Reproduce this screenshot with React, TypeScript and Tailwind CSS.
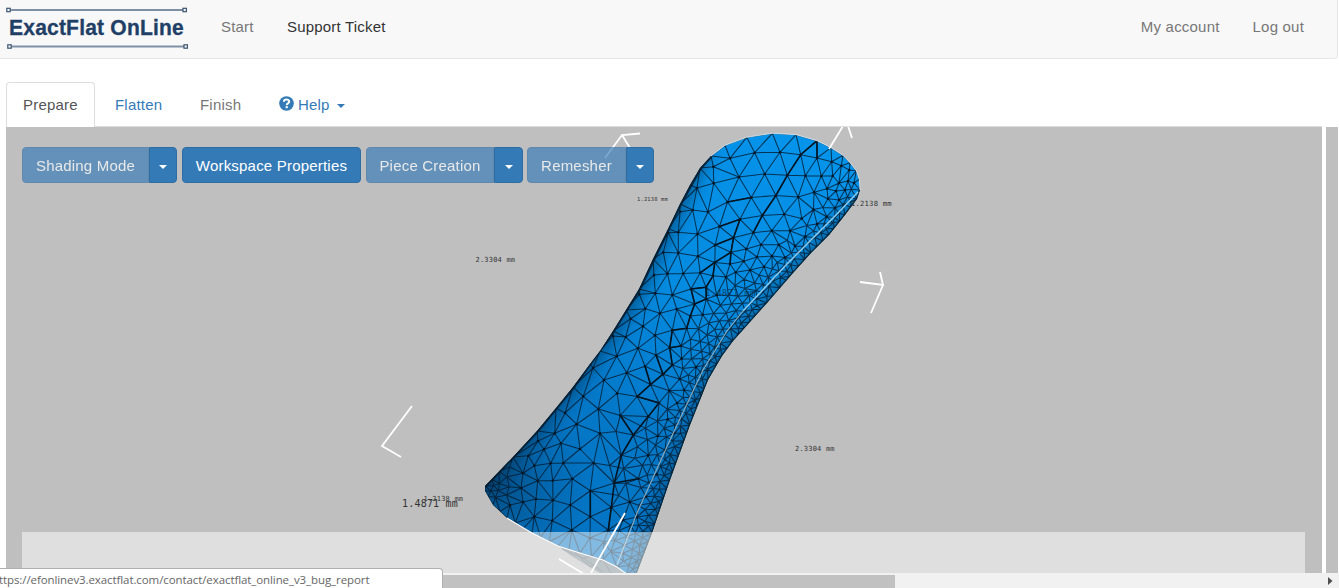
import React from "react";

type Pt = [number, number];

const OUTLINE: Pt[] = [
  [711, 156], [725, 145.3], [746.7, 137.3], [772.3, 133.3], [796, 134.7], [817, 140.7], [831, 147.7], [843, 155.3],
  [850, 162.7], [856.3, 170.7], [859.3, 179.3], [860, 190], [857, 199], [845, 215], [829, 235], [811, 253], [793, 273], [767, 303],
  [733, 341], [722, 356], [708, 380], [690, 425], [670, 480], [652, 533], [636, 575], [627, 575], [617, 567],
  [603, 560], [580, 553], [558, 546], [532, 533], [507, 518], [493, 505], [485, 491], [485, 486], [513, 457], [537, 431],
  [556, 408], [573, 387], [590, 364], [600, 351], [613, 331], [639, 289], [653, 259], [668, 229], [680, 204], [690, 185], [700, 168],
];

const RIGHT_EDGE: Pt[] = OUTLINE.slice(11, 25);

const SEAM: Pt[] = [
  [858, 192], [837, 214], [822, 229], [787, 264], [743, 311], [727, 331], [703, 370], [670, 440], [637, 513], [617, 565],
];

const VERTS: Pt[] = [
  [730, 158.3], [754.7, 152.7], [780, 152.3], [800.7, 154.7], [817, 158], [831.7, 161.7], [841.3, 165.7], [849.3, 170],
  [713.3, 166.7], [713.7, 183.3], [739, 177], [764.7, 174], [787.3, 175.3], [805.3, 175.7], [821.3, 176], [832.7, 176],
  [839, 183], [848, 181], [854, 183], [697, 188], [692.7, 210], [708, 212], [727.5, 202], [751.3, 197.5], [775.9, 195.5],
  [798.2, 197], [814, 192.3], [827, 188.7], [836, 191], [845, 190], [828, 198.7], [839, 200], [835, 208], [813.5, 209.5],
  [719.5, 226.5], [740, 219.3], [762.3, 215.5], [784.2, 214.2], [801.7, 218.5], [817, 224], [826.7, 216.7], [680, 211.7],
  [697.5, 233.9], [678.3, 232.3], [668.3, 232.7], [715.2, 245], [733.5, 237.8], [753.3, 232.7], [771.7, 230.7],
  [790, 230.7], [805, 236.7], [731, 252.3], [746.3, 249], [761, 244.7], [778.7, 244.7], [795, 246], [714.8, 262.4],
  [698, 256.3], [678.3, 253], [663.3, 252.3], [730, 264], [743.7, 261.3], [757, 257], [772, 256], [785, 257.5],
  [700.2, 272.8], [713, 275.8], [726, 277], [735.7, 272.3], [750, 270], [764, 266.7], [683.2, 273.5], [667.5, 273.8],
  [654, 275], [706, 287.3], [691, 289], [694.7, 304], [706.3, 299], [716.7, 295.3], [672.3, 295], [655.3, 293.3],
  [639.3, 294.3], [676.7, 309], [660, 313.3], [645.3, 308.7], [630.7, 318.7], [643, 326.3], [625.7, 337], [638, 348.3],
  [655, 335.3], [672.3, 330.3], [686.7, 328.3], [690.3, 316], [702.7, 314.7], [681, 346], [669.7, 347.7], [656, 355],
  [645, 366.3], [626.8, 372.8], [616.7, 356.3], [672.3, 365], [663, 374.2], [681.7, 358.7], [613, 336], [604, 380],
  [593, 368], [583.2, 396.4], [598.3, 409], [617.2, 393.2], [637.2, 396.5], [650.6, 384.5], [620.3, 415.5], [648.2, 416.5],
  [659, 403], [669.3, 390.7], [576.7, 424.2], [565, 413], [679.7, 379], [696, 367], [684, 390], [677, 403],
  [667.7, 419.3], [600, 433.3], [633.3, 435], [658, 436], [674.3, 433.3], [580, 449], [561, 443.3], [554.7, 433.3],
  [593.7, 463], [621.3, 455.3], [648.3, 455.3], [665, 450], [544, 449.3], [538, 441], [563.3, 463], [572.3, 478.7],
  [614.3, 483], [638.3, 478.7], [656.7, 474.3], [550.7, 463.3], [552.7, 480.7], [537.7, 480.7], [534.3, 465.7],
  [528.3, 455.7], [523, 473.3], [590.3, 490.7], [570.3, 505], [553, 500.3], [590.3, 516.7], [611.3, 507.3], [629.7, 502],
  [646, 496.7], [534.3, 516.7], [536, 499], [552.3, 520.7], [571.7, 530], [608.3, 530], [590, 538], [623, 520],
  [637, 517], [523, 502], [521, 488], [510, 505],
];

// Feature edges drawn heavier than the rest of the wireframe.
const CREASES: Pt[][] = [
  [[817, 140.7], [800.7, 154.7], [787.3, 175.3], [775.9, 195.5], [762.3, 215.5], [753.3, 232.7]],
  [[817, 140.7], [817, 158]],
  [[751.3, 197.5], [727.5, 202]],
  [[719.5, 226.5], [740, 219.3], [733.5, 237.8], [731, 252.3], [730, 264]],
  [[733.5, 237.8], [715.2, 245]],
  [[731, 252.3], [714.8, 262.4], [700.2, 272.8]],
  [[714.8, 262.4], [713, 275.8], [706, 287.3], [706.3, 299], [694.7, 304], [691, 289], [706, 287.3]],
  [[694.7, 304], [690.3, 316], [686.7, 328.3], [672.3, 330.3], [669.7, 347.7], [672.3, 365], [663, 374.2], [656, 355]],
  [[681, 346], [669.7, 347.7]],
  [[645, 366.3], [650.6, 384.5], [637.2, 396.5]],
  [[663, 374.2], [650.6, 384.5]],
  [[637.2, 396.5], [659, 403], [648.2, 416.5], [633.3, 435], [620.3, 415.5]],
  [[633.3, 435], [621.3, 455.3], [614.3, 483], [638.3, 478.7]],
  [[614.3, 483], [611.3, 507.3], [608.3, 530]],
  [[590.3, 490.7], [590.3, 516.7]],
];

function segmentDistance(p: Pt, a: Pt, b: Pt): number {
  const dx = b[0] - a[0];
  const dy = b[1] - a[1];
  const t = Math.max(0, Math.min(1, ((p[0] - a[0]) * dx + (p[1] - a[1]) * dy) / (dx * dx + dy * dy)));
  return Math.hypot(p[0] - a[0] - t * dx, p[1] - a[1] - t * dy);
}

function pathDistance(p: Pt, path: Pt[]): number {
  let best = Infinity;
  for (let i = 1; i < path.length; i++) best = Math.min(best, segmentDistance(p, path[i - 1], path[i]));
  return best;
}

function inside(p: Pt, poly: Pt[]): boolean {
  let hit = false;
  for (let i = 0, j = poly.length - 1; i < poly.length; j = i++) {
    const [xi, yi] = poly[i];
    const [xj, yj] = poly[j];
    if (yi > p[1] !== yj > p[1] && p[0] < ((xj - xi) * (p[1] - yi)) / (yj - yi) + xi) hit = !hit;
  }
  return hit;
}

function cellSize(p: Pt): number {
  const right = 4.8 + 0.17 * pathDistance(p, RIGHT_EDGE);
  const tip = 4.4 + 0.18 * Math.hypot(p[0] - 485, p[1] - 488);
  return Math.min(right, tip, 18);
}

function buildPoints(): Pt[] {
  const pts: Pt[] = VERTS.slice();
  const closed = [...OUTLINE, OUTLINE[0]];
  for (let i = 1; i < closed.length; i++) {
    const a = closed[i - 1];
    const b = closed[i];
    const isRim = i <= 11;
    const step = isRim ? 100 : i <= 24 ? 9 : i <= 34 ? 11 : 26;
    const n = Math.max(1, Math.round(Math.hypot(b[0] - a[0], b[1] - a[1]) / step));
    for (let k = 0; k < n; k++) {
      pts.push([a[0] + ((b[0] - a[0]) * k) / n + i * 1e-4, a[1] + ((b[1] - a[1]) * k) / n + k * 1e-4]);
    }
  }
  let seed = 7;
  const random = () => {
    seed = (seed * 16807) % 2147483647;
    return seed / 2147483647;
  };
  for (let y = 150; y < 573; y += 2) {
    for (let x = 486; x < 862; x += 2) {
      const p: Pt = [x + random() * 1.6, y + random() * 1.6];
      if (!inside(p, OUTLINE)) continue;
      const size = cellSize(p);
      if (pts.every((q) => Math.hypot(p[0] - q[0], p[1] - q[1]) > size)) pts.push(p);
    }
  }
  return pts;
}

interface Tri {
  v: [number, number, number];
  cx: number;
  cy: number;
  r: number;
}

function triangulate(source: Pt[]): [Pt, Pt, Pt][] {
  const pts: Pt[] = [...source, [-4000, -3000], [5000, -3000], [600, 6000]];
  const n = source.length;
  const make = (a: number, b: number, c: number): Tri => {
    const [ax, ay] = pts[a];
    const [bx, by] = pts[b];
    const [cx, cy] = pts[c];
    const d = 2 * (ax * (by - cy) + bx * (cy - ay) + cx * (ay - by)) || 1e-9;
    const a2 = ax * ax + ay * ay;
    const b2 = bx * bx + by * by;
    const c2 = cx * cx + cy * cy;
    const ux = (a2 * (by - cy) + b2 * (cy - ay) + c2 * (ay - by)) / d;
    const uy = (a2 * (cx - bx) + b2 * (ax - cx) + c2 * (bx - ax)) / d;
    return { v: [a, b, c], cx: ux, cy: uy, r: (ax - ux) ** 2 + (ay - uy) ** 2 };
  };
  let tris: Tri[] = [make(n, n + 1, n + 2)];
  for (let i = 0; i < n; i++) {
    const [x, y] = pts[i];
    const edges = new Map<string, [number, number]>();
    const keep: Tri[] = [];
    for (const t of tris) {
      if ((x - t.cx) ** 2 + (y - t.cy) ** 2 >= t.r) {
        keep.push(t);
        continue;
      }
      for (let e = 0; e < 3; e++) {
        const a = t.v[e];
        const b = t.v[(e + 1) % 3];
        const key = a < b ? `${a}-${b}` : `${b}-${a}`;
        if (edges.has(key)) edges.delete(key);
        else edges.set(key, [a, b]);
      }
    }
    edges.forEach(([a, b]) => keep.push(make(a, b, i)));
    tris = keep;
  }
  return tris
    .filter((t) => t.v.every((k) => k < n))
    .map((t) => [pts[t.v[0]], pts[t.v[1]], pts[t.v[2]]] as [Pt, Pt, Pt]);
}

const line = (p: Pt[]) => p.map(([x, y], i) => `${i ? "L" : "M"}${x.toFixed(1)} ${y.toFixed(1)}`).join("");

// Each shared edge is emitted once so that translucent strokes do not double up.
function meshPath(): string {
  const edges = new Map<string, string>();
  for (const t of triangulate(buildPoints())) {
    const center: Pt = [(t[0][0] + t[1][0] + t[2][0]) / 3, (t[0][1] + t[1][1] + t[2][1]) / 3];
    if (!inside(center, OUTLINE)) continue;
    for (let e = 0; e < 3; e++) {
      const pair = [t[e], t[(e + 1) % 3]].sort((a, b) => a[0] - b[0] || a[1] - b[1]);
      const d = line(pair);
      edges.set(d, d);
    }
  }
  return Array.from(edges.values()).join("");
}

const MESH_PATH = meshPath();
const OUTLINE_PATH = line(OUTLINE) + "Z";

function Viewport() {
  return (
    <svg className="absolute inset-0 h-full w-full" viewBox="6 127 1316 446" preserveAspectRatio="none">
      <defs>
        <linearGradient id="body" gradientUnits="userSpaceOnUse" x1="785" y1="140" x2="560" y2="540">
          <stop offset="0" stopColor="#0693ea" />
          <stop offset="0.4" stopColor="#058be0" />
          <stop offset="0.7" stopColor="#0478c8" />
          <stop offset="1" stopColor="#0474c4" />
        </linearGradient>
        <radialGradient id="tip" gradientUnits="userSpaceOnUse" cx="485" cy="480" r="110">
          <stop offset="0" stopColor="#002a4c" stopOpacity="0.65" />
          <stop offset="0.5" stopColor="#003a64" stopOpacity="0.28" />
          <stop offset="1" stopColor="#004a80" stopOpacity="0" />
        </radialGradient>
        <clipPath id="hull">
          <path d={OUTLINE_PATH} />
        </clipPath>
        <filter id="soft" x="-20%" y="-20%" width="140%" height="140%">
          <feGaussianBlur stdDeviation="7" />
        </filter>
      </defs>

      <path d="M558 546L570 555L583 563L603 575H628L617 567L603 560L580 553Z" fill="#7f8c94" />
      <path d="M562 549L583 558L603 572M575 552L590 567L603 560L612 575M583 558L592 556" stroke="#5c656b" fill="none" strokeWidth="0.8" />

      <g clipPath="url(#hull)">
        <path d={OUTLINE_PATH} fill="url(#body)" />
        <path d={OUTLINE_PATH} fill="url(#tip)" />
        <path
          d="M705 150L680 204L639 289L613 331L573 387L537 431L485 486"
          fill="none" stroke="#003660" strokeOpacity="0.6" strokeWidth="15" filter="url(#soft)"
        />
        <path d={line(RIGHT_EDGE.slice(1))} fill="none" stroke="#003660" strokeOpacity="0.7" strokeWidth="9" filter="url(#soft)" />
        <path d={MESH_PATH} fill="none" stroke="#02192b" strokeOpacity="0.78" strokeWidth="1.05" strokeLinejoin="round" />
        {CREASES.map((c, i) => (
          <path key={i} d={line(c)} fill="none" stroke="#021421" strokeWidth="1.6" />
        ))}
        {VERTS.map(([x, y], i) => (
          <circle key={i} cx={x} cy={y} r="1.3" fill="#02182a" />
        ))}
        <path d="M711 156L700 168L680 204L639 289L613 331L573 387L537 431L485 486" fill="none" stroke="#041a2a" strokeWidth="4" strokeOpacity="0.85" />
        <path d={line(RIGHT_EDGE)} fill="none" stroke="#04202f" strokeWidth="2.5" strokeOpacity="0.8" />
        <text x="705" y="296" fontSize="9" fill="#03243c" fillOpacity="0.75" fontFamily="'DejaVu Sans Mono', monospace">1.4871 mm</text>
      </g>
      <path d={line(SEAM.slice(0, 5))} fill="none" stroke="#8ccbf0" strokeWidth="1.5" />
      <path d={line(SEAM.slice(4))} fill="none" stroke="#87a9bd" strokeWidth="1.2" />
      <path d={line(OUTLINE.slice(0, 12))} fill="none" stroke="#e6f2fa" strokeWidth="0.8" />
      <path d="M507 518L532 533L558 546L580 553L603 560L617 567L628 575" fill="none" stroke="#ffffff" strokeWidth="1.1" />

      <g fill="none" stroke="#ffffff" strokeWidth="1.8">
        <path d="M412 406L382 446L401 457" />
        <path d="M605 158L622 135L640 133.500M622 135L630 148" />
        <path d="M829 149L843 126M848 126L852 138" />
        <path d="M860 282L883 285L880 272M883 285L871 313" />
        <path d="M625 513L591 573M559 559L584 574" />
      </g>
      <g fontFamily="'DejaVu Sans Mono', monospace" fill="#333">
        <text x="637" y="201" fontSize="5.4">1.2138 mm</text>
        <text x="475.500" y="261.500" fontSize="7">2.3304 mm</text>
        <text x="851" y="205.500" fontSize="7.200">1.2138 mm</text>
        <text x="795" y="450.500" fontSize="7">2.3304 mm</text>
        <text x="423.500" y="500.500" fontSize="7">1.2138 mm</text>
        <text x="402" y="507" fontSize="10">1.4871 mm</text>
      </g>
    </svg>
  );
}

function Caret({ className }: { className: string }) {
  return <svg className={className} width="8" height="4" viewBox="0 0 8 4"><path d="M0 0H8L4 4Z" fill="currentColor" /></svg>;
}

function SplitButton({ label, main, toggle }: { label: string; main: string; toggle: string }) {
  return (
    <div className="flex h-9">
      <button className={`h-9 rounded-l-[4px] border border-[#2e6da4] bg-[#337ab7] pt-[2px] text-center whitespace-nowrap text-white opacity-65 ${main}`}>
        {label}
      </button>
      <button className={`flex h-9 items-center justify-center rounded-r-[4px] border border-[#2e6da4] bg-[#337ab7] pt-1 text-white ${toggle}`}>
        <Caret className="block" />
      </button>
    </div>
  );
}

function Logo() {
  return (
    <svg className="block h-[44px] w-[184px]" viewBox="0 0 184 44">
      <g fill="none" stroke="#5d7590">
        <path d="M4 5H180M5 41.500H181" strokeWidth="1.8" stroke="#7e90a6" />
        <g fill="#f8f8f8" stroke="#3b5573" strokeWidth="1.2">
          <rect x="1.800" y="3.300" width="3.400" height="3.400" />
          <rect x="178" y="3.300" width="3.400" height="3.400" />
          <rect x="2.800" y="39.800" width="3.400" height="3.400" />
          <rect x="179" y="39.800" width="3.400" height="3.400" />
        </g>
      </g>
      <text x="4" y="30" fontSize="21.500" fontWeight="700" fill="#1f3f66" stroke="#1f3f66" strokeWidth="0.3" textLength="175" lengthAdjust="spacingAndGlyphs" fontFamily="'Liberation Sans', Arial, sans-serif">
        ExactFlat OnLine
      </text>
    </svg>
  );
}

export default function App() {
  return (
    <div className="flex h-[588px] w-[1339px] flex-col overflow-hidden bg-white font-['Liberation_Sans',Arial,sans-serif] text-[15px] leading-5 tracking-[0.2px]">
      <header className="mr-px flex h-[59px] shrink-0 rounded-br-[4px] border-r border-b border-[#e7e7e7] bg-[#f8f8f8] pt-[5px] pl-[5px] text-[#777]">
        <Logo />
        <nav className="flex pt-3">
          <a className="ml-8 w-[66px]">Start</a>
          <a className="text-[#333]">Support Ticket</a>
        </nav>
        <nav className="ml-auto flex gap-[33px] pt-3 pr-[33px]">
          <a>My account</a>
          <a>Log out</a>
        </nav>
      </header>

      <div className="mt-[23px] flex h-[45px] shrink-0 pl-[6px]">
        <div className="w-[89px] rounded-t-[4px] border border-b-0 border-[#ddd] pt-[12px] pl-4 text-[#555]">Prepare</div>
        <div className="flex w-[1227px] border-b border-[#ddd] pt-[13px]">
          <a className="ml-5 w-[85px] text-[#337ab7]">Flatten</a>
          <a className="w-[79px] text-[#777]">Finish</a>
          <a className="flex text-[#337ab7]">
            <svg className="mt-[1px] mr-1 block" width="15" height="15" viewBox="0 0 15 15">
              <circle cx="7.500" cy="7.500" r="7.300" fill="currentColor" />
              <path d="M4.900 5.700C4.900 2.600 10.200 2.700 10.200 5.600C10.200 7.600 7.700 7.200 7.700 9.200" fill="none" stroke="#fff" strokeWidth="2" />
              <rect x="6.600" y="10.200" width="2.200" height="2" fill="#fff" />
            </svg>
            Help
            <Caret className="mt-[9px] ml-[7px] block" />
          </a>
        </div>
      </div>

      <div className="flex h-[446px] shrink-0 pl-[6px]">
        <main className="relative flex w-[1316px] flex-col justify-between bg-[#bfbfbf] pt-5 pr-[17px] pl-4">
          <Viewport />
          <div className="relative flex">
            <SplitButton label="Shading Mode" main="w-[127px]" toggle="w-7" />
            <button className="ml-[5px] h-9 w-[179px] rounded-[4px] border border-[#2e6da4] bg-[#337ab7] pt-[2px] whitespace-nowrap text-white">
              Workspace Properties
            </button>
            <div className="ml-[5px]"><SplitButton label="Piece Creation" main="w-[128px]" toggle="w-[29px]" /></div>
            <div className="ml-1"><SplitButton label="Remesher" main="w-[99px]" toggle="w-7" /></div>
          </div>
          <div className="relative h-[41px] bg-white/50" />
        </main>
        <div className="ml-1 w-3 bg-[#bfbfbf]" />
      </div>

      <footer className="relative flex h-[15px] shrink-0 bg-[#f1f1f1] pt-[2px]">
        <div className="h-[13px] w-[895px] bg-[#c1c1c1]" />
        <svg className="mt-[2px] ml-[433px] block" width="5" height="8" viewBox="0 0 5 8"><path d="M0 0L4.500 4L0 8Z" fill="#505050" /></svg>
        <div className="absolute bottom-0 left-0 h-[20px] w-[443px] overflow-hidden rounded-tr-[4px] border-t border-r border-[#b0b0b0] bg-white font-['Open_Sans','Noto_Sans',sans-serif] text-[11.5px] leading-[21px] whitespace-nowrap text-[#666]">
          <span className="-ml-px tracking-[-0.09px]">ttps://efonlinev3.exactflat.com/contact/exactflat_online_v3_bug_report</span>
        </div>
      </footer>
    </div>
  );
}
